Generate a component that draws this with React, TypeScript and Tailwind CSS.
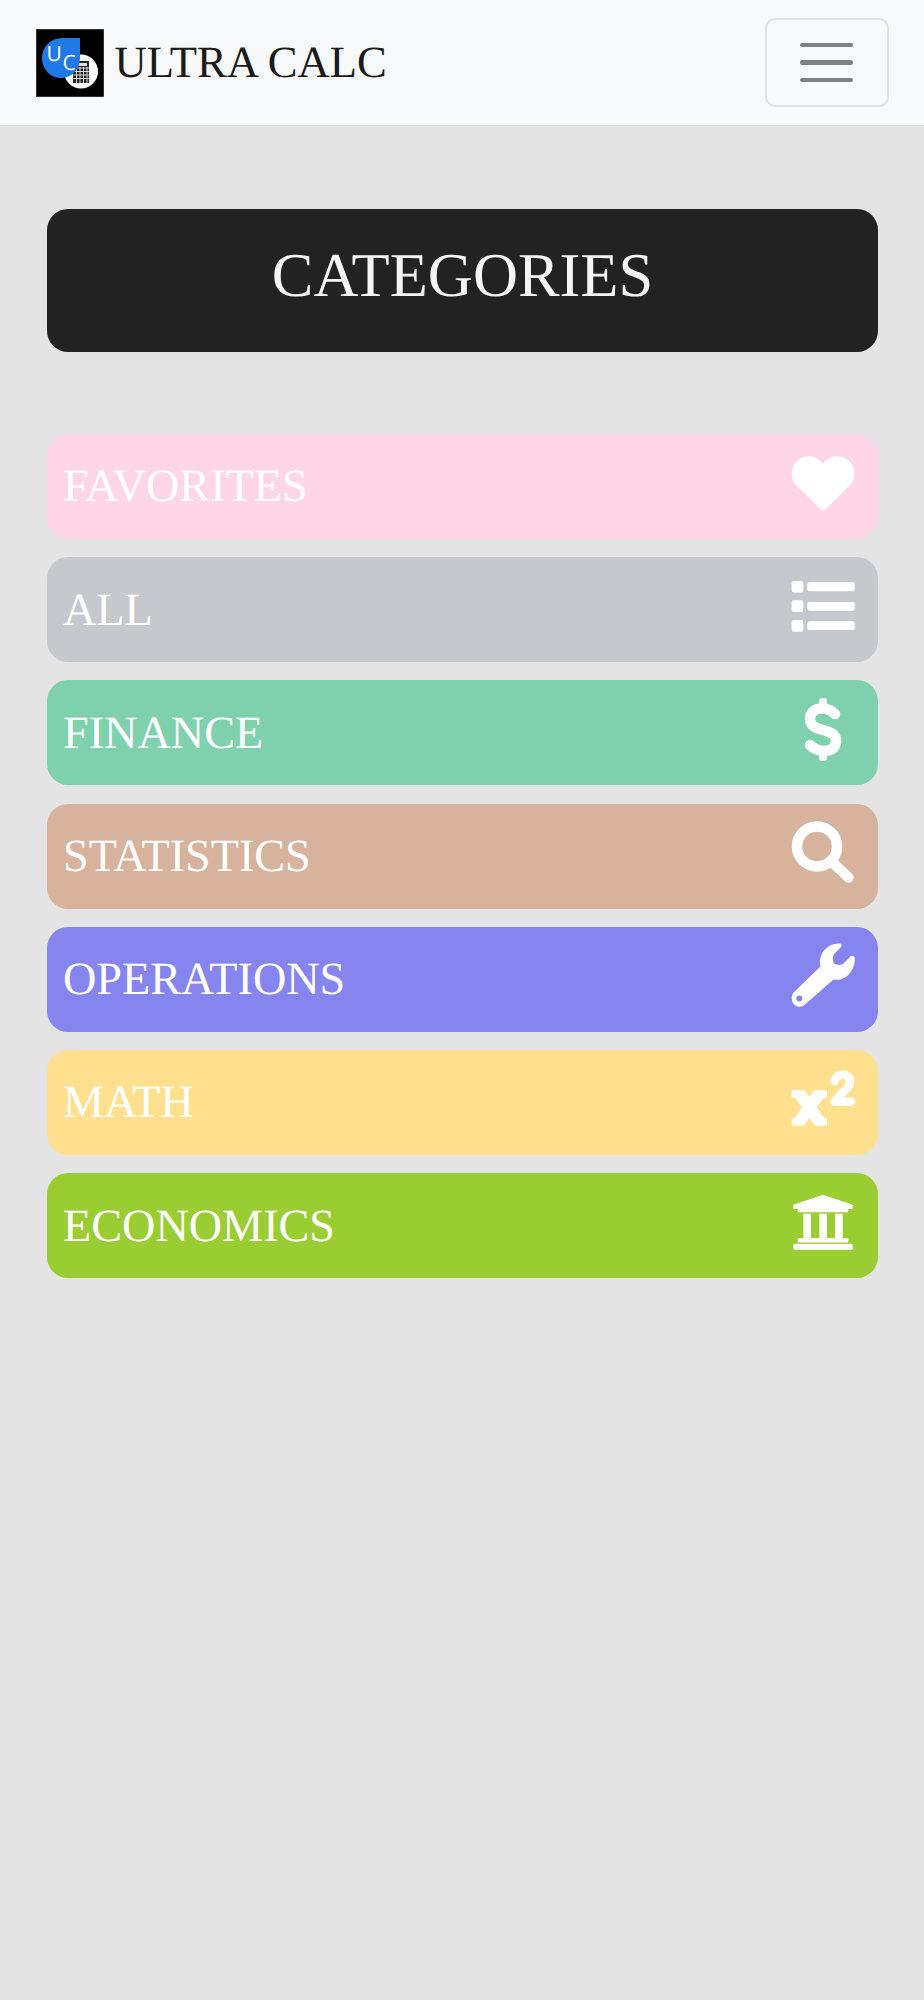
import type { ReactNode } from 'react';

type Category = {
  name: string;
  color: string;
  icon: ReactNode;
};

// Icons drawn on a 64 box, they spill over it a little like the originals do
const HeartIcon = () => (
  <path d="M29.5 54.2L5 30C-1 23.5-.5 12 6 6 13-.5 24 0 30 6.5L32 8.5 34 6.5C40 0 51-.5 58 6 64.5 12 65 23.5 59 30L34.5 54.2C33 55.7 31 55.7 29.5 54.2Z" />
);

const ListIcon = () => (
  <>
    <rect x="0.7" y="3" width="11.6" height="11.4" rx="2" />
    <rect x="0.7" y="22.3" width="11.6" height="11.6" rx="2" />
    <rect x="0.7" y="42" width="11.6" height="11.7" rx="2" />
    <rect x="16.3" y="4.3" width="47.4" height="9" rx="2" />
    <rect x="16.3" y="24" width="47.4" height="8.7" rx="2" />
    <rect x="16.3" y="43.3" width="47.4" height="8.7" rx="2" />
  </>
);

const DollarIcon = () => (
  <>
    <rect x="28" y="-2.7" width="8" height="12" rx="2" />
    <rect x="28" y="48" width="8" height="11.7" rx="2" />
    <path
      d="M44 13C40 9 36 7.5 31 7.5 23 7.5 19 12 19 18 19 24 23 26.5 32 29 41 31.5 45 34 45 40 45 46 41 50 33 50 27 50 23 48 19 44"
      fill="none"
      stroke="currentColor"
      strokeWidth="10.5"
      strokeLinecap="round"
    />
  </>
);

const SearchIcon = () => (
  <>
    <circle cx="26" cy="22.4" r="20" fill="none" stroke="currentColor" strokeWidth="10.5" />
    <path d="M40 37L57.5 53.5" fill="none" stroke="currentColor" strokeWidth="10.5" strokeLinecap="round" />
  </>
);

const WrenchIcon = () => (
  <path
    fillRule="evenodd"
    d="M2.5 45.5L29.5 19.5C27 9 34-3 48-3.4 50.5-3.5 51.5-1.5 50 0L43 7C41.5 9 42 15 43 16.5 45 18 50 18.5 52 17L59.5 9.5C61 8 63.5 9 63.7 11 64.5 24 54 35 42.5 32.5L14 57.5C9 62 2 59 1 53.5 .3 50.5 1 47.5 2.5 45.5ZM8.3 48.6A3 3 0 1 0 8.3 54.6 3 3 0 1 0 8.3 48.6Z"
  />
);

const SquaredIcon = () => (
  <>
    <rect x="0.7" y="20" width="12.5" height="8" rx="1.5" />
    <rect x="23.5" y="20" width="12.5" height="8" rx="1.5" />
    <rect x="0.7" y="47.7" width="12.5" height="8" rx="1.5" />
    <rect x="23.5" y="47.7" width="12.5" height="8" rx="1.5" />
    <path d="M9 24L28 51M28 24L9 51" fill="none" stroke="currentColor" strokeWidth="12" />
    <path
      d="M43.5 11C45 7 48 4.8 51.5 4.8 56 4.8 59 7.5 59 11.5 59 15 57 17.5 54 20L43.5 31.5H60"
      fill="none"
      stroke="currentColor"
      strokeWidth="8.5"
      strokeLinecap="round"
      strokeLinejoin="round"
    />
  </>
);

const BankIcon = () => (
  <>
    <path d="M32 .7L61 10.5C61.5 10.7 61.7 11 61.7 11.5V14C61.7 14.6 61.3 15 60.7 15H3.3C2.7 15 2.3 14.6 2.3 14V11.5C2.3 11 2.5 10.7 3 10.5Z" />
    <rect x="6.7" y="15" width="50.6" height="3.3" rx="1" />
    <rect x="12.3" y="19.7" width="7.7" height="24.3" />
    <rect x="28.3" y="19.7" width="7.7" height="24.3" />
    <rect x="44" y="19.7" width="7.7" height="24.3" />
    <rect x="6.7" y="44" width="50.6" height="4.5" rx="1" />
    <rect x="2.3" y="49.7" width="59.4" height="6" rx="1.5" />
  </>
);

const categories: Category[] = [
  { name: 'FAVORITES', color: 'bg-[#ffd6e7]', icon: <HeartIcon /> },
  { name: 'ALL', color: 'bg-[#c5c9ce]', icon: <ListIcon /> },
  { name: 'FINANCE', color: 'bg-[#7fd1ae]', icon: <DollarIcon /> },
  { name: 'STATISTICS', color: 'bg-[#d7b29d]', icon: <SearchIcon /> },
  { name: 'OPERATIONS', color: 'bg-[#8685ef]', icon: <WrenchIcon /> },
  { name: 'MATH', color: 'bg-[#ffe08f]', icon: <SquaredIcon /> },
  { name: 'ECONOMICS', color: 'bg-[#9acd32]', icon: <BankIcon /> },
];

const Logo = () => (
  <svg viewBox="0 0 68 68" className="h-[68px] w-[68px] shrink-0">
    <rect width="68" height="68" fill="#000" stroke="#666" strokeWidth="1" />
    <circle cx="45" cy="42.5" r="17" fill="#fff" />
    <rect x="37" y="32" width="16" height="22" fill="#222" />
    <rect x="39" y="34" width="12" height="3" fill="#ddd" />
    <g stroke="#fff" strokeWidth="0.8">
      <path d="M37 39H53M37 42.5H53M37 46H53M37 49.5H53" />
      <path d="M40.5 38V54M44 38V54M47.5 38V54M51 38V54" />
    </g>
    <path d="M6 29A20 20 0 0 1 26 9H44V29A19 20 0 0 1 6 29Z" fill="#1f7ae8" />
    <text x="10.5" y="32" fill="#fff" fontSize="21" fontFamily="'Open Sans', sans-serif">U</text>
    <text x="26.5" y="41" fill="#fff" fontSize="21" fontFamily="'Open Sans', sans-serif">C</text>
  </svg>
);

export default function App() {
  return (
    <div className="min-h-[2000px] bg-[#e4e4e4] font-['Liberation_Serif',serif] [text-rendering:geometricPrecision]">
      <nav className="flex h-[125px] items-center justify-between bg-[#f8f9fa] pl-9 pr-[35.5px]">
        <div className="flex items-center gap-[10.5px]">
          <Logo />
          <span className="text-[44.6px] leading-none text-[#1a1a1a]">ULTRA CALC</span>
        </div>
        <button className="flex h-[89px] w-[124px] flex-col items-center justify-center gap-[13px] rounded-[10px] border-2 border-[#e1e2e3]">
          <span className="h-[4.5px] w-[53px] rounded-full bg-[#808080]" />
          <span className="h-[4.5px] w-[53px] rounded-full bg-[#808080]" />
          <span className="h-[4.5px] w-[53px] rounded-full bg-[#808080]" />
        </button>
      </nav>

      <main className="flex flex-col pl-[47px] pr-[46px] pt-[84px]">
        <h1 className="flex h-[143px] items-center justify-center rounded-[21px] bg-[#222222] pb-[8px] text-[62.4px] leading-none text-[#f5f5f5]">
          CATEGORIES
        </h1>

        <div className="mt-[82px] flex flex-col gap-[18.2px]">
          {categories.map(({ name, color, icon }) => (
            <div key={name} className={`flex h-[105px] items-center justify-between rounded-[21px] pl-4 pr-[23px] ${color}`}>
              <span className="text-[46.2px] leading-none text-white">{name}</span>
              <svg viewBox="0 0 64 64" className="h-16 w-16 overflow-visible text-white" fill="currentColor">
                {icon}
              </svg>
            </div>
          ))}
        </div>
      </main>
    </div>
  );
}
